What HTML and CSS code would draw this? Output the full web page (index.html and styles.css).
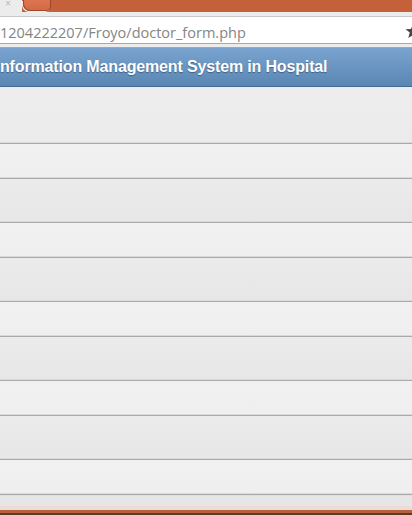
FILE: index.html
```html
<!DOCTYPE html>
<html lang="en">
<head>
<meta charset="utf-8">
<title>doctor_form.php</title>
<link rel="stylesheet" href="styles.css">
</head>
<body>
<div class="window">
  <div class="tabstrip">
    <div class="tab-active"><span class="tab-close">×</span></div>
    <div class="tab-inactive"></div>
  </div>
  <div class="toolbar">
    <div class="urlbar">
      <span class="url">1204222207/Froyo/doctor_form.php</span>
      <svg class="star" width="16" height="16" viewBox="0 0 16 16" aria-hidden="true">
        <path d="M8 1 L10 6 L15.5 6.3 L11.2 9.6 L12.7 15 L8 12 L3.3 15 L4.8 9.6 L0.5 6.3 L6 6 Z" fill="#444444"/>
      </svg>
    </div>
  </div>
  <div class="page">
    <header class="page-header">
      <h1 class="title">nformation Management System in Hospital</h1>
    </header>
    <ul class="list">
      <li class="row row-first"></li>
      <li class="row row-light"></li>
      <li class="row row-dark"></li>
      <li class="row row-light"></li>
      <li class="row row-dark"></li>
      <li class="row row-light"></li>
      <li class="row row-dark"></li>
      <li class="row row-light"></li>
      <li class="row row-dark"></li>
      <li class="row row-light"></li>
      <li class="row row-last"></li>
    </ul>
  </div>
  <div class="frame-bottom">
    <div class="frame-pink"></div>
    <div class="frame-orange"></div>
    <div class="frame-dark"></div>
  </div>
</div>
</body>
</html>
```
FILE: styles.css
```css
html, body {
  margin: 0;
  padding: 0;
  width: 412px;
  height: 515px;
  overflow: hidden;
  background: #ececec;
}

.window {
  display: flex;
  flex-direction: column;
  width: 412px;
  height: 515px;
  overflow: hidden;
}

.tabstrip {
  display: flex;
  height: 12px;
  flex: none;
  background: #c5613a;
}

.tab-active {
  width: 22px;
  height: 12px;
  background: #ececec;
  display: flex;
  align-items: flex-start;
  justify-content: center;
}

.tab-close {
  font-family: "DejaVu Sans", sans-serif;
  font-size: 8px;
  line-height: 8px;
  color: #b5b5b5;
  margin-right: 6px;
}

.tab-inactive {
  width: 26px;
  height: 10px;
  margin-left: 1px;
  background: linear-gradient(#de7550, #d26a45);
  border: 1px solid #9a4a2a;
  border-top: none;
  border-radius: 0 0 5px 7px;
  box-shadow: -1px 1px 0 #ececec;
}

.toolbar {
  flex: none;
  height: 35px;
  background: #ececec;
  padding-top: 4px;
  box-sizing: border-box;
}

.urlbar {
  display: flex;
  align-items: center;
  justify-content: space-between;
  height: 28px;
  background: #ffffff;
  border-top: 1px solid #c8c8c8;
  border-bottom: 1px solid #a8a8a8;
  box-sizing: border-box;
  overflow: hidden;
  padding-top: 4px;
}

.url {
  font-family: "Open Sans", sans-serif;
  font-size: 14.5px;
  color: #858585;
  white-space: nowrap;
}

.star {
  flex: none;
  margin-right: -9px;
  margin-top: -2px;
}

.page {
  flex: 1;
  display: flex;
  flex-direction: column;
  overflow: hidden;
}

.page-header {
  flex: none;
  height: 40px;
  box-sizing: border-box;
  background: linear-gradient(#7aa4cf, #5a86b4);
  border-top: 1px solid #86add4;
  border-bottom: 1px solid #456b93;
  display: flex;
  align-items: center;
  overflow: hidden;
}

.title {
  margin: 0;
  font-family: "Liberation Sans", Arial, sans-serif;
  font-weight: bold;
  font-size: 16px;
  color: #ffffff;
  text-shadow: 0 1px 1px #3e5f86;
  white-space: nowrap;
  letter-spacing: -0.15px;
}

.list {
  list-style: none;
  margin: 0;
  padding: 0;
  display: flex;
  flex-direction: column;
}

.row {
  flex: none;
  box-sizing: border-box;
  border-bottom: 1px solid #aaaaaa;
  box-shadow: inset 0 -1px 0 #dadada;
}

.row-first {
  height: 57px;
  background: linear-gradient(#ededee, #ebebeb);
}

.row-dark {
  height: 44px;
  background: linear-gradient(#ebebeb, #e7e7e7);
}

.row-light {
  height: 35px;
  background: linear-gradient(#f1f1f1, #efefef);
}

.row-last {
  height: 12px;
  border-bottom: none;
  box-shadow: none;
  background: #e6e6e6;
  border-top: 1px solid #e0e0e0;
}

.frame-bottom {
  flex: none;
  display: flex;
  flex-direction: column;
}

.frame-pink {
  height: 4px;
  background: #ecdcd8;
}

.frame-orange {
  height: 3px;
  background: #b6613c;
}

.frame-dark {
  height: 2px;
  background: #5a3b2b;
}
```
